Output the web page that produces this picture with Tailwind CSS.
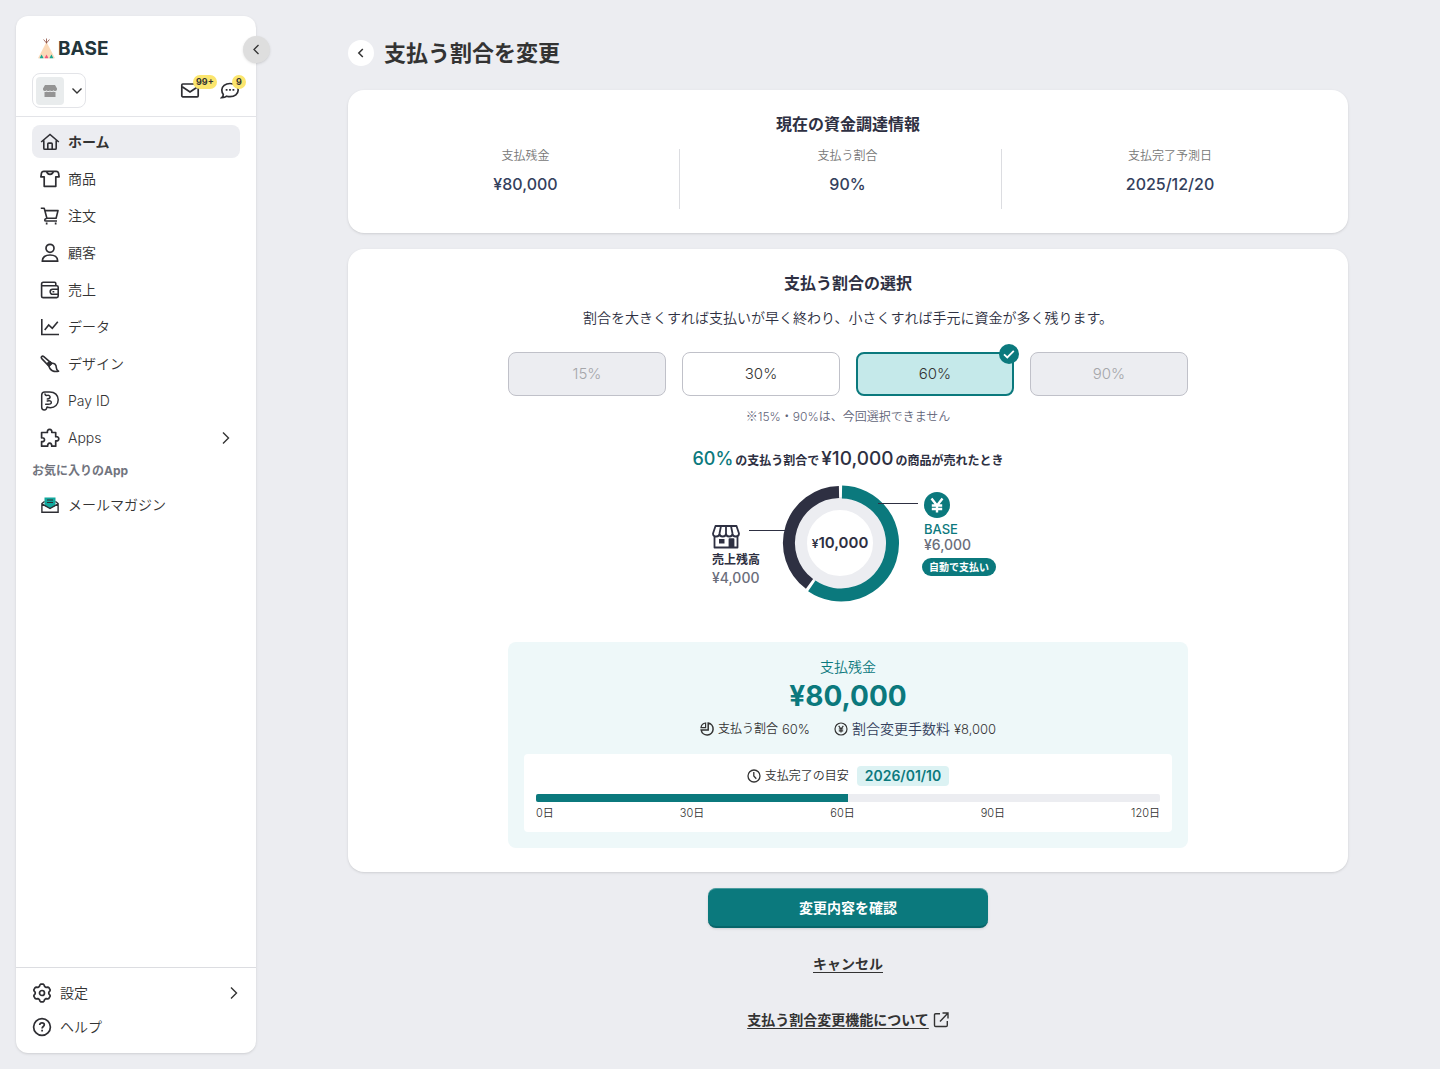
<!DOCTYPE html>
<html lang="ja">
<head>
    <meta charset="UTF-8">
    <meta name="viewport" content="width=device-width, initial-scale=1.0">
    <title>支払う割合を変更 | BASE</title>
    <script src="https://cdn.jsdelivr.net/npm/@tailwindcss/browser@4"></script>
    <style>
        body {
            font-family: Inter, 'Noto Sans CJK JP', sans-serif;
        }
    </style>
</head>
<body class="bg-[#ecedf1] text-[#333333] flex min-h-screen">

    <!-- Sidebar -->
    <aside class="sticky top-4 m-4 mr-0 flex h-[calc(100vh-32px)] w-60 shrink-0 flex-col rounded-xl bg-white text-sm font-[350] shadow-sm">
        <button type="button" aria-label="メニューを閉じる" class="absolute top-5 -right-[14px] flex size-[27px] items-center justify-center rounded-full bg-[#dedede] shadow-sm">
            <svg width="14" height="14" viewBox="0 0 14 14" fill="none" stroke="currentColor" stroke-width="1.3"><path d="M8.500 2 4 6.500 8.500 11"/></svg>
        </button>

        <div class="border-b border-[#e3e4e8] px-4 pt-[21px] pb-2">
            <a href="#" class="ml-[5px] flex h-6 items-center gap-[2px] text-[19px] font-bold text-[#22353b]">
                <svg class="shrink-0" width="19" height="22" viewBox="0 0 19 22">
                    <path d="M9.500 4 18 20.200H1z" fill="#fbd9b8"/>
                    <path d="M9.500 5.500V.5M9.500 5 6.600 1.500M9.500 5l2.900-3.500" stroke="#8b4a3c" stroke-width=".8" fill="none"/>
                    <path d="m4.600 16.500 2 3.700h-4zM14.400 16.500l2 3.700h-4z" fill="#15a694"/>
                    <path d="m9.500 16.500 2 3.700h-4z" fill="#f0567a"/>
                </svg>
                <span>BASE</span>
            </a>
            <div class="mt-3 flex h-[35px] items-center justify-between">
                <button type="button" aria-label="ショップを選択" class="flex h-[35px] w-[54px] items-center gap-[7px] rounded-lg border border-[#e3e4e8] pl-[3px]">
                    <span class="flex size-7 items-center justify-center rounded bg-[#e9eced]">
                        <svg width="14" height="12" viewBox="0 0 14 12" fill="#949494"><path d="M2 0h10l2 3.500v1a2 2 0 0 1-2 1.500 2 2 0 0 1-1.700-.8 2 2 0 0 1-3.300 0 2 2 0 0 1-3.300 0A2 2 0 0 1 2 6 2 2 0 0 1 0 4.500v-1z"/><path d="M1.500 7c1 .2 1.800-.1 2.300-.5.9.7 2.300.7 3.200 0 .9.7 2.300.7 3.200 0 .5.4 1.300.7 2.300.5v5h-11z"/></svg>
                    </span>
                    <svg width="12" height="12" viewBox="0 0 12 12" fill="none" stroke="currentColor" stroke-width="1.4"><path d="M1.500 3.500 6 8l4.500-4.500"/></svg>
                </button>
                <div class="flex gap-5">
                    <button type="button" aria-label="お知らせ" class="relative size-5">
                        <svg width="20" height="20" viewBox="0 0 20 20" fill="none" stroke="#2e2e33" stroke-width="1.700"><rect x="1.800" y="3" width="16.400" height="12.800" rx="1"/><path d="m2.200 5.700 7.800 5.300 7.800-5.300"/></svg>
                        <span class="absolute -top-[6px] left-[13px] rounded-full bg-[#fbe56d] px-[3px] text-[9px] leading-[14px] font-bold">99+</span>
                    </button>
                    <button type="button" aria-label="メッセージ" class="relative size-5">
                        <svg width="20" height="20" viewBox="0 0 20 20" fill="none" stroke="#2e2e33" stroke-width="1.700"><path d="M10 2.500c4.700 0 8.200 2.900 8.200 6.600s-3.500 6.600-8.200 6.600c-1.200 0-2.300-.2-3.300-.5-.8.7-2.500 1.500-4.900 1.500 1-.8 1.500-1.800 1.500-3.100C2.400 12.400 1.800 10.900 1.800 9.100c0-3.700 3.500-6.600 8.200-6.600z"/><path d="M5.700 8.800h1.800M9.100 8.800h1.800M12.500 8.800h1.800" stroke-width="1.800"/></svg>
                        <span class="absolute -top-[6px] left-3 size-[14px] rounded-full bg-[#fbe56d] text-center text-[9px] leading-[14px] font-bold">9</span>
                    </button>
                </div>
            </div>
        </div>

        <nav class="flex flex-1 flex-col gap-1 px-4 pt-2">
            <a href="#" class="flex h-[33px] items-center gap-2 rounded-lg bg-[#ecedf1] px-2 font-bold">
                <svg width="20" height="20" viewBox="0 0 20 20" fill="none" stroke="#2e2e33" stroke-width="1.600"><path d="m1.200 10 8.800-7.500 8.800 7.500M3.800 8.500v7.700c0 .7.400 1.100 1.100 1.100h10.200c.7 0 1.100-.4 1.100-1.100V8.500M7.800 17v-5c0-.6.300-.9.900-.9h2.600c.6 0 .9.300.9.900v5"/></svg>
                ホーム
            </a>
            <a href="#" class="flex h-[33px] items-center gap-2 px-2">
                <svg width="20" height="20" viewBox="0 0 20 20" fill="none" stroke="#2e2e33" stroke-width="1.700" stroke-linejoin="round"><path d="M6.500 2.300H3.700c-1 0-1.900.6-2.200 1.600l-.6 3.900h3.300v9.500h11.600V7.800h3.300l-.6-3.900c-.3-1-1.200-1.600-2.200-1.600h-2.800c-.5 2-1.700 3-3.500 3s-3-1-3.500-3zM6.500 2.300h7"/></svg>
                商品
            </a>
            <a href="#" class="flex h-[33px] items-center gap-2 px-2">
                <svg width="20" height="20" viewBox="0 0 20 20" fill="none" stroke="#2e2e33" stroke-width="1.600" stroke-linejoin="round"><path d="M.8 2.200h3.400l2.700 10.100h9.200L18 4.600H4.900M6.900 12.300c-1.600.4-2.200.9-2.200 1.600s.5 1.100 1.300 1.100h11"/><path d="M5.800 17.500h1.700M14.800 17.500h1.700" stroke-width="1.900"/></svg>
                注文
            </a>
            <a href="#" class="flex h-[33px] items-center gap-2 px-2">
                <svg width="20" height="20" viewBox="0 0 20 20" fill="none" stroke="#2e2e33" stroke-width="1.700" stroke-linejoin="round"><circle cx="10" cy="5.300" r="4"/><path d="M2.300 18.200c0-4.300 3.200-6.200 7.700-6.200s7.700 1.900 7.700 6.200z"/></svg>
                顧客
            </a>
            <a href="#" class="flex h-[33px] items-center gap-2 px-2">
                <svg width="20" height="20" viewBox="0 0 20 20" fill="none" stroke="#2e2e33" stroke-width="1.600" stroke-linejoin="round"><path d="M15.800 5.700V3.500c0-.8-.4-1.200-1.200-1.200H3.300c-1 0-1.700.7-1.700 1.700v11.900c0 1 .7 1.700 1.700 1.700h13.400c1 0 1.500-.6 1.500-1.500V7.200c0-.9-.5-1.500-1.500-1.500H2"/><path d="M18 9.300h-5.300a2.500 2.500 0 0 0 0 5H18M12.500 11.800h1.800"/></svg>
                売上
            </a>
            <a href="#" class="flex h-[33px] items-center gap-2 px-2">
                <svg width="20" height="20" viewBox="0 0 20 20" fill="none" stroke="#2e2e33" stroke-width="1.600"><path d="M1.800 2v15.500H19M4.700 13l4-5 3.600 3.300 5.500-6.500"/></svg>
                データ
            </a>
            <a href="#" class="flex h-[33px] items-center gap-2 px-2">
                <svg width="20" height="20" viewBox="0 0 20 20" fill="none" stroke="#2e2e33" stroke-width="1.600" stroke-linejoin="round"><path d="M8.500 11.800 1.800 4.600c-.6-.7-.6-1.500-.1-2s1.400-.5 2.100.1l7.500 6.500zM9 12l2.600-2.700c2.700-.3 4.700 1.200 4.700 4.300 0 1.600.7 2.900 2.200 3.700-4.500.8-8.800-.6-9.500-5.300z"/><path d="m7.500 9.500 2.300-1.800 2 1.600L9 12z" fill="#2e2e33"/></svg>
                デザイン
            </a>
            <a href="#" class="flex h-[33px] items-center gap-2 px-2">
                <svg width="20" height="20" viewBox="0 0 20 20" fill="none" stroke="#2e2e33" stroke-width="1.500" stroke-linejoin="round" stroke-linecap="round"><path d="M4.800.9h5c5 0 8.400 3.400 8.400 7.900 0 4.700-3.300 7.900-7.700 7.900-1.200 0-2.400-.2-3.500-.7-.2 2-1.200 3-2.700 3s-2.600-1-2.600-2.700V4c0-2 1.100-3.100 3.100-3.100z"/><path d="M5 3c.3 1.200 1.200 1.700 2.300 1.400 1.300-.4 2.800.2 2.800 1.700 0 1.300-1 1.800-2.800 1.800M7.300 10c2.200-.8 4 0 4 1.400s-1.300 1.900-3.500 1.800H5.700"/></svg>
                Pay ID
            </a>
            <a href="#" class="flex h-[33px] items-center gap-2 px-2">
                <svg width="20" height="20" viewBox="0 0 20 20" fill="none" stroke="#2e2e33" stroke-width="1.700" stroke-linejoin="round"><path d="M7.400 4.500c-.3-2 .6-3.200 2.200-3.200s2.500 1.200 2.200 3.200h3.900v4.200c2-.3 3.100.6 3.100 2.100s-1.100 2.400-3.100 2.100v5.300h-4c.2-2-.6-3-2-3s-2.200 1-2 3H1.600v-4.600c2 .2 2.900-.6 2.900-1.900s-.9-2.100-2.900-1.900V4.500z"/></svg>
                <span class="flex-1">Apps</span>
                <svg width="12" height="14" viewBox="0 0 12 14" fill="none" stroke="currentColor" stroke-width="1.400"><path d="M3 1.500 8.500 7 3 12.500"/></svg>
            </a>
            <h2 class="mt-1 text-xs leading-[18px] font-bold text-[#71747e]">お気に入りのApp</h2>
            <a href="#" class="mt-1 flex h-[33px] items-center gap-2 px-2">
                <svg width="20" height="20" viewBox="0 0 20 20" fill="none"><path d="M4.500 2.500h11v8.500L10 13.500 4.500 11z" fill="#12a89d"/><path d="M7 5h6M7 7.500h6" stroke="#2e2e33"/><path d="m4.500 6.500-2.600 2v8.700h16.200V8.500l-2.600-2M1.900 8.800 10 13.500l8.100-4.700" stroke="#2e2e33" stroke-width="1.400"/></svg>
                メールマガジン
            </a>
        </nav>

        <div class="flex flex-col gap-[2px] border-t border-[#dcdde1] px-4 pt-[9px] pb-[10px]">
            <a href="#" class="flex h-8 items-center gap-2">
                <svg width="20" height="20" viewBox="0 0 20 20" fill="none" stroke="#2e2e33" stroke-width="1.700" stroke-linejoin="round"><circle cx="10" cy="10" r="2.500"/><path d="m7.900 2 .7-.8h2.800l.7.800.6 1.600 1.400.8 1.700-.3 1 .4 1.400 2.400-.3 1-1.100 1.300v1.600l1.100 1.300.3 1-1.400 2.400-1 .4-1.700-.3-1.400.8-.6 1.600-.7.800H8.600l-.7-.8-.6-1.600-1.400-.8-1.700.3-1-.4-1.400-2.400.3-1 1.100-1.300V9.200L2.100 7.900l-.3-1 1.400-2.400 1-.4 1.700.3 1.400-.8z"/></svg>
                <span class="flex-1">設定</span>
                <svg width="12" height="14" viewBox="0 0 12 14" fill="none" stroke="currentColor" stroke-width="1.400"><path d="M3 1.500 8.500 7 3 12.500"/></svg>
            </a>
            <a href="#" class="flex h-8 items-center gap-2">
                <svg width="20" height="20" viewBox="0 0 20 20" fill="none" stroke="#2e2e33" stroke-width="1.700"><circle cx="10" cy="10" r="8.400"/><path d="M7.700 8c.1-1.400 1-2.200 2.300-2.200s2.300.8 2.300 2c0 1.700-2.200 1.700-2.200 3.600M10.100 12.800v1.800"/></svg>
                ヘルプ
            </a>
        </div>
    </aside>

    <!-- Main -->
    <main class="flex-1 px-6 pt-9 pb-[38px]">
        <div class="mx-auto max-w-[1000px]">
            <div class="flex h-[34px] items-center gap-[10px]">
                <a href="#" aria-label="戻る" class="flex size-[26px] items-center justify-center rounded-full bg-white">
                    <svg width="12" height="12" viewBox="0 0 12 12" fill="none" stroke="currentColor" stroke-width="1.500"><path d="M7.800 2 3.800 6l4 4"/></svg>
                </a>
                <h1 class="text-[22px] leading-[34px] font-semibold">支払う割合を変更</h1>
            </div>

            <!-- 現在の資金調達情報 -->
            <section class="mt-5 rounded-2xl bg-white p-6 text-center shadow-sm">
                <h2 class="text-base leading-5 font-semibold text-[#2e3042]">現在の資金調達情報</h2>
                <dl class="mt-[15px] grid h-[60px] grid-cols-3 gap-[14px]">
                    <div class="border-r border-[#dcdde1]">
                        <dt class="text-xs leading-[14px] font-[350] text-[#777777]">支払残金</dt>
                        <dd class="mt-2 text-base leading-[26px] font-medium text-[#33405c]">¥80,000</dd>
                    </div>
                    <div class="border-r border-[#dcdde1]">
                        <dt class="text-xs leading-[14px] font-[350] text-[#777777]">支払う割合</dt>
                        <dd class="mt-2 text-base leading-[26px] font-medium text-[#33405c]">90%</dd>
                    </div>
                    <div>
                        <dt class="text-xs leading-[14px] font-[350] text-[#777777]">支払完了予測日</dt>
                        <dd class="mt-2 text-base leading-[26px] font-medium text-[#33405c]">2025/12/20</dd>
                    </div>
                </dl>
            </section>

            <!-- 支払う割合の選択 -->
            <section class="mt-4 rounded-2xl bg-white p-6 shadow-sm">
                <div class="mx-auto max-w-[680px] text-center">
                    <h2 class="text-base leading-5 font-semibold text-[#2e3042]">支払う割合の選択</h2>
                    <p class="mt-[15px] text-sm font-[350] text-[#2e3042]">割合を大きくすれば支払いが早く終わり、小さくすれば手元に資金が多く残ります。</p>

                    <fieldset aria-label="支払う割合" class="mt-6 grid grid-cols-4 gap-4 text-[15px] font-light">
                        <label class="relative flex h-11 items-center justify-center rounded-lg border border-[#c0c1c9] bg-[#ecedf1] text-[#a5a6aa]">
                            <input type="radio" name="rate" value="15" class="sr-only" disabled>15%
                        </label>
                        <label class="relative flex h-11 items-center justify-center rounded-lg border border-[#c0c1c9] bg-white">
                            <input type="radio" name="rate" value="30" class="sr-only">30%
                        </label>
                        <label class="relative flex h-11 items-center justify-center rounded-lg border-2 border-[#0b797d] bg-[#c5e9ea]">
                            <input type="radio" name="rate" value="60" class="sr-only" checked>60%
                            <svg class="absolute -top-[10px] -right-[7px]" width="20" height="20" viewBox="0 0 20 20" fill="none"><circle cx="10" cy="10" r="10" fill="#0b797d"/><path d="m5 10.300 3.300 3.200 6.500-6.700" stroke="#fff" stroke-width="1.800"/></svg>
                        </label>
                        <label class="relative flex h-11 items-center justify-center rounded-lg border border-[#c0c1c9] bg-[#ecedf1] text-[#a5a6aa]">
                            <input type="radio" name="rate" value="90" class="sr-only" disabled>90%
                        </label>
                    </fieldset>
                    <p class="mt-[11px] text-xs leading-[18px] font-[350] text-[#5f6478]"><span class="font-['Noto_Sans_CJK_JP']">※</span>15%・90%は、今回選択できません</p>

                    <p class="mt-[19px] flex h-7 items-baseline justify-center gap-[2px] text-xs font-semibold text-[#2e3042]">
                        <span class="text-lg leading-7 font-medium text-[#0b797d]">60%</span>の支払う割合で<span class="text-[19px] leading-7 font-medium">¥10,000</span>の商品が売れたとき
                    </p>

                    <!-- Donut chart -->
                    <div class="mt-[11px] flex justify-center pl-[10px] text-left">
                        <div class="pt-10 pl-[2px]">
                            <svg width="28" height="26" viewBox="0 0 28 26" fill="none" stroke="#2e3042" stroke-width="1.800" stroke-linejoin="round">
                                <path d="M3.500 2h21L27 9.500c0 2-1.300 3-3.200 3s-3.300-1-3.300-3c0 2-1.300 3-3.250 3S14 11.500 14 9.500c0 2-1.300 3-3.250 3s-3.250-1-3.250-3c0 2-1.300 3-3.300 3s-3.200-1-3.200-3zM9 2 7.500 9.500M14 2v7.500M19 2l1.500 7.500M2.500 12v11.500h23V12"/>
                                <path d="M7 15h5.500v4.500H7z" fill="#2e3042" stroke="none"/><path d="M17.500 23.500v-8.300h4v8.300" fill="#2e3042"/>
                            </svg>
                            <p class="mt-[3px] text-xs leading-[14px] font-semibold text-[#2e3042]">売上残高</p>
                            <p class="mt-[3px] text-sm leading-4 font-medium text-[#6b6e7b]">¥4,000</p>
                        </div>
                        <svg class="-ml-3" width="172" height="120" viewBox="0 0 172 120" fill="none" role="img" aria-label="売上残高 ¥4,000、BASE ¥6,000">
                            <circle cx="92" cy="59" r="39.500" stroke="#ecedf1" stroke-width="13"/>
                            <path d="M94 8A51.500 51.500 0 1 1 63.800 101.900" stroke="#0b797d" stroke-width="13"/>
                            <path d="M91 8A51 51 0 0 0 61.500 99.900" stroke="#2e3042" stroke-width="12"/>
                            <path d="M1 46.500h40M130 19.500h40" stroke="#2e3042"/>
                            <text x="92" y="64" text-anchor="middle" font-size="15" font-weight="600" fill="#2e3042"><tspan font-size="12">¥</tspan>10,000</text>
                        </svg>
                        <div class="pt-[7px] pl-[2px]">
                            <svg class="ml-[2px]" width="28" height="28" viewBox="0 0 28 28"><circle cx="13" cy="14" r="13" fill="#0b797d"/><path d="m7.500 7.500 5.500 7 5.500-7M7.800 14.500h10.400M7.800 18h10.400M13 14v7.500" fill="none" stroke="#fff" stroke-width="2.400"/></svg>
                            <p class="mt-[2px] ml-[2px] text-[13px] leading-4 font-medium text-[#0b797d]">BASE</p>
                            <p class="ml-[2px] text-sm leading-4 font-medium text-[#6b6e7b]">¥6,000</p>
                            <p class="mt-[5px] rounded-full bg-[#0b797d] px-[7px] text-[10px] leading-[18px] font-semibold text-white">自動で支払い</p>
                        </div>
                    </div>

                    <!-- Result -->
                    <div class="mt-[38px] rounded-lg bg-[#eef8f9] p-4">
                        <p class="text-sm leading-[18px] font-[350] text-[#0b797d]">支払残金</p>
                        <p class="mt-[2px] text-[28px] leading-9 font-bold text-[#0b797d]">¥80,000</p>
                        <div class="mt-[5px] flex h-5 justify-center gap-6 text-[13px] leading-[22px] font-[350]">
                            <p class="flex items-center gap-1">
                                <svg width="14" height="14" viewBox="0 0 14 14" fill="none" stroke="currentColor" stroke-width="1.500"><path d="M8.200 1.100a6 6 0 1 1-7 7h7z"/><path d="M5.600 1v4.600H1A5.400 5.400 0 0 1 5.600 1z" stroke-width="1.200"/></svg>
                                <span class="text-xs">支払う割合</span> 60%
                            </p>
                            <p class="flex items-center gap-1">
                                <svg width="14" height="14" viewBox="0 0 14 14" fill="none" stroke="currentColor" stroke-width="1.200"><circle cx="7" cy="7" r="6"/><path d="M4.700 3.800 7 7l2.300-3.200M4.800 7h4.400M4.800 8.800h4.400M7 7v3.500"/></svg>
                                <span class="text-sm text-[#33405c]">割合変更手数料</span> ¥8,000
                            </p>
                        </div>
                        <div class="mt-[15px] rounded bg-white px-3 pt-3 pb-[13px]">
                            <div class="flex h-5 items-center justify-center gap-2 text-xs font-[350]">
                                <p class="flex items-center gap-1">
                                    <svg width="14" height="14" viewBox="0 0 14 14" fill="none" stroke="currentColor" stroke-width="1.300"><circle cx="7" cy="7" r="6"/><path d="M6.800 3v4l2.500 2.700"/></svg>
                                    支払完了の目安
                                </p>
                                <span class="rounded bg-[#dcf2f3] px-2 text-sm leading-5 font-semibold text-[#0b797d]">2026/01/10</span>
                            </div>
                            <div class="mt-2 h-2 overflow-hidden rounded-xs bg-[#ecedf1]">
                                <div class="h-full bg-[#0b797d]" style="width: 50%"></div>
                            </div>
                            <div class="mt-[5px] flex justify-between text-[11px] leading-3 font-[350]">
                                <span>0日</span><span>30日</span><span>60日</span><span>90日</span><span>120日</span>
                            </div>
                        </div>
                    </div>
                </div>
            </section>

            <div class="mt-4 flex flex-col items-center text-sm font-semibold">
                <button type="button" class="h-10 w-70 rounded-lg border-t border-b-2 border-t-[#4c9da0] border-b-[#07656a] bg-[#0b797d] text-white shadow-sm">変更内容を確認</button>
                <a href="#" class="mt-[26px] underline underline-offset-3">キャンセル</a>
                <a href="#" class="mt-9 flex items-center gap-1">
                    <span class="underline underline-offset-3">支払う割合変更機能について</span>
                    <svg width="16" height="16" viewBox="0 0 16 16" fill="none" stroke="currentColor" stroke-width="1.400"><path d="M7 1.700H2.700c-.7 0-1.200.5-1.200 1.200v10.400c0 .7.500 1.200 1.200 1.200h10.400c.7 0 1.200-.5 1.200-1.200V9M9.500 1h5.500v5.500M15 1 7 9.500"/></svg>
                </a>
            </div>
        </div>
    </main>

</body>
</html>
